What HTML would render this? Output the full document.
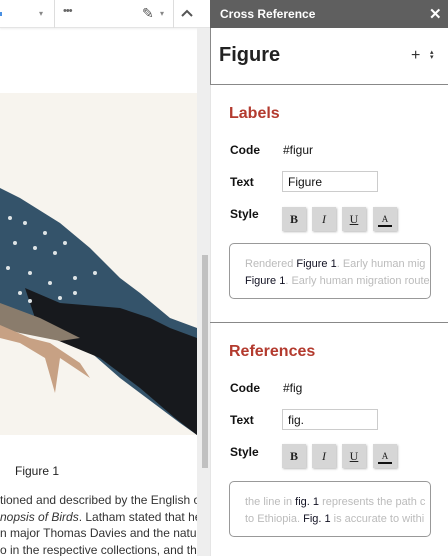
<!DOCTYPE html>
<html><head><style>
*{margin:0;padding:0;box-sizing:border-box}
body{width:448px;height:556px;overflow:hidden;background:#fff;font-family:"Liberation Sans",Arial,sans-serif;position:relative}
.abs{position:absolute}
.lbl{position:absolute;left:230px;font-size:12px;font-weight:bold;color:#111}
.val{position:absolute;left:283px;font-size:12px;color:#111}
.inp{position:absolute;left:282px;width:96px;height:21px;border:1px solid #ccc;font-size:12px;padding:3px 0 0 5px;color:#111}
.btn{position:absolute;width:24px;height:24px;background:#d6d6d6;box-shadow:1px 1px 2px #bbb;font-family:"Liberation Serif",serif;font-size:12px;text-align:center;line-height:24px;color:#222}
.prev{position:absolute;left:229px;width:202px;height:56px;border:1px solid #999;border-radius:5px;font-size:11px;color:#bbb;padding:12px 0 0 15px;line-height:17px;white-space:nowrap;overflow:hidden}
.prev b{font-weight:normal;color:#112}
.h{position:absolute;left:229px;font-size:16px;font-weight:bold;color:#b33a2e}
.docw{position:absolute;left:0;top:492px;width:197px;height:64px;overflow:hidden}
.doc{width:215px;font-family:"Liberation Sans",sans-serif;font-size:12px;color:#333;text-align:justify;text-align-last:justify;white-space:nowrap;height:16.5px;line-height:16.5px}
</style></head><body>
<!-- toolbar -->
<div class="abs" style="left:0;top:0;width:210px;height:28px;background:#fff;border-bottom:1px solid #e4e4e4;box-shadow:0 1px 2px #eee"></div>
<div class="abs" style="left:0;top:12px;width:2px;height:4px;background:#4a90e2"></div>
<div class="abs" style="left:39px;top:9px;font-size:8px;color:#888">▾</div>
<div class="abs" style="left:54px;top:0;width:1px;height:28px;background:#ddd"></div>
<div class="abs" style="left:63px;top:5px;font-size:11px;color:#666;letter-spacing:-1px">•••</div>
<div class="abs" style="left:142px;top:5px;font-size:14px;color:#555">✎</div>
<div class="abs" style="left:160px;top:9px;font-size:8px;color:#888">▾</div>
<div class="abs" style="left:173px;top:0;width:1px;height:28px;background:#ddd"></div>
<svg class="abs" style="left:180px;top:8px" width="14" height="10"><path d="M2 8 L7 3 L12 8" stroke="#555" stroke-width="2" fill="none"/></svg>
<!-- image -->
<svg class="abs" style="left:0;top:93px" width="197" height="342">
<rect width="197" height="342" fill="#f7f4ee"/>
<path d="M0 95 L20 105 L60 130 L90 155 L120 185 L140 200 L170 225 L197 235 L197 342 L180 330 L140 300 L120 285 L80 250 L0 225 Z" fill="#34536a"/>
<path d="M25 195 L60 210 L120 215 L150 225 L170 235 L197 245 L197 342 L175 325 L140 295 L100 265 L40 240 Z" fill="#17191d"/>
<path d="M0 210 L40 225 L80 245 L60 248 L20 240 L0 235 Z" fill="#8a7c6c"/>
<path d="M0 232 L30 245 L50 250 L80 270 L90 285 L60 265 L55 300 L45 265 L20 250 L0 245Z" fill="#c7a184"/>
<g fill="#dfe4e6"><circle cx="10" cy="125" r="2"/><circle cx="25" cy="130" r="2"/><circle cx="45" cy="140" r="2"/><circle cx="15" cy="150" r="2"/><circle cx="35" cy="155" r="2"/><circle cx="55" cy="160" r="2"/><circle cx="65" cy="150" r="2"/><circle cx="8" cy="175" r="2"/><circle cx="30" cy="180" r="2"/><circle cx="50" cy="190" r="2"/><circle cx="75" cy="185" r="2"/><circle cx="95" cy="180" r="2"/><circle cx="20" cy="200" r="2"/><circle cx="60" cy="205" r="2"/><circle cx="75" cy="200" r="2"/><circle cx="30" cy="208" r="2"/></g>
</svg>
<!-- scrollbar -->
<div class="abs" style="left:197px;top:28px;width:13px;height:528px;background:#eee"></div>
<div class="abs" style="left:202px;top:255px;width:6px;height:213px;background:#c1c1c1"></div>
<div class="abs" style="top:464px;left:15px;font-size:12px;color:#222">Figure 1</div>
<div class="docw">
<div class="doc">tioned and described by the English ornith</div>
<div class="doc"><i>nopsis of Birds</i>. Latham stated that he had</div>
<div class="doc">n major Thomas Davies and the naturalist</div>
<div class="doc">o in the respective collections, and the bi</div>
</div>
<!-- sidebar -->
<div class="abs" style="left:210px;top:0;width:238px;height:28px;background:#5f5f5f"></div>
<div class="abs" style="left:220px;top:7px;color:#fff;font-size:12px;font-weight:bold">Cross Reference</div>
<div class="abs" style="left:429px;top:5px;color:#fff;font-size:15px;font-weight:bold">✕</div>
<div class="abs" style="left:210px;top:28px;width:238px;height:57px;border-left:1px solid #888;border-bottom:1px solid #888"></div>
<div class="abs" style="left:219px;top:44px;font-size:20px;font-weight:bold;color:#222">Figure</div>
<div class="abs" style="left:411px;top:47px;font-size:16px;color:#333">+</div>
<div class="abs" style="left:430px;top:50px;font-size:7px;color:#333;line-height:5px">▴<br>▾</div>
<div class="abs" style="left:210px;top:85px;width:1px;height:471px;background:#e5e5e5"></div>
<div class="h" style="top:105px">Labels</div>
<div class="lbl" style="top:143px">Code</div><div class="val" style="top:143px">#figur</div>
<div class="lbl" style="top:175px">Text</div><div class="inp" style="top:171px">Figure</div>
<div class="lbl" style="top:207px">Style</div>
<div class="btn" style="left:282px;top:207px;font-weight:bold">B</div>
<div class="btn" style="left:312px;top:207px;font-style:italic">I</div>
<div class="btn" style="left:342px;top:207px;text-decoration:underline">U</div>
<div class="btn" style="left:373px;top:207px;font-size:9px">A<div style="position:absolute;left:5px;top:18px;width:14px;height:2px;background:#111"></div></div>
<div class="prev" style="top:243px">Rendered <b>Figure 1</b>. Early human mig<br><b>Figure 1</b>. Early human migration route</div>
<div class="abs" style="left:210px;top:322px;width:238px;height:1px;background:#888"></div>
<div class="h" style="top:343px">References</div>
<div class="lbl" style="top:381px">Code</div><div class="val" style="top:381px">#fig</div>
<div class="lbl" style="top:413px">Text</div><div class="inp" style="top:409px">fig.</div>
<div class="lbl" style="top:445px">Style</div>
<div class="btn" style="left:282px;top:444px;font-weight:bold">B</div>
<div class="btn" style="left:312px;top:444px;font-style:italic">I</div>
<div class="btn" style="left:342px;top:444px;text-decoration:underline">U</div>
<div class="btn" style="left:373px;top:444px;font-size:9px">A<div style="position:absolute;left:5px;top:18px;width:14px;height:2px;background:#111"></div></div>
<div class="prev" style="top:481px">the line in <b>fig. 1</b> represents the path c<br>to Ethiopia. <b>Fig. 1</b> is accurate to withi</div>
</body></html>
